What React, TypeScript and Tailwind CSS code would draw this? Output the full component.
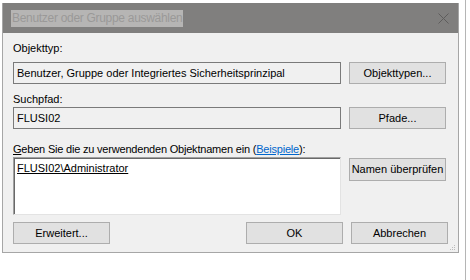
import React from "react";

const font = { fontFamily: '"Liberation Sans", Arial, sans-serif' };

function Btn({ children, className = "" }: { children: React.ReactNode; className?: string }) {
  return (
    <div
      className={`flex items-center justify-center border border-[#adadad] bg-[#e1e1e1] text-[11px] text-black ${className}`}
    >
      {children}
    </div>
  );
}

export default function App() {
  return (
    <div className="relative h-[280px] w-[470px] overflow-hidden bg-white" style={font}>
      <div className="flex h-full">
        <div className="ml-[2px] mt-[3px] flex h-[250px] w-[457px] flex-col border-x border-b border-[#a6a6a6] bg-[#f0f0f0]">
          {/* title bar */}
          <div className="flex h-[30px] shrink-0 items-center bg-[#807f7e] pl-[8px] pr-[9px]">
            <span className="bg-[#b6b5b4] px-[1px] text-[12px] leading-[17px] tracking-[-0.3px] text-[#9a9998]">
              Benutzer oder Gruppe auswählen
            </span>
            <div className="ml-auto flex items-center">
              <svg width="11" height="11" viewBox="0 0 11 11">
                <path d="M0.5 0.5 L10.5 10.5 M10.5 0.5 L0.5 10.5" stroke="#5e5d5c" strokeWidth="1" />
              </svg>
            </div>
          </div>
          {/* body */}
          <div className="relative flex flex-1 flex-col px-[10px] text-[11px] text-black">
            <div className="mt-[9px] h-[13px] leading-[13px]">Objekttyp:</div>
            <div className="mt-[7px] flex h-[22px] gap-[8px]">
              <div className="flex w-[328px] items-center border border-[#7a7a7a] bg-[#f0f0f0] pl-[3px]">
                Benutzer, Gruppe oder Integriertes Sicherheitsprinzipal
              </div>
              <Btn className="w-[97px]">Objekttypen...</Btn>
            </div>
            <div className="mt-[9px] h-[13px] leading-[13px]">Suchpfad:</div>
            <div className="mt-[1px] flex h-[22px] gap-[8px]">
              <div className="flex w-[328px] items-center border border-[#7a7a7a] bg-[#f0f0f0] pl-[3px]">
                FLUSI02
              </div>
              <Btn className="w-[97px]">Pfade...</Btn>
            </div>
            <div className="mt-[14px] h-[13px] leading-[13px] tracking-[-0.2px]">
              <span className="underline">G</span>eben Sie die zu verwendenden Objektnamen ein (
              <span className="text-[#0066cc] underline">Beispiele</span>):
            </div>
            <div className="mt-[1px] flex gap-[8px]">
              <div className="h-[58px] w-[328px] border border-t-[#a0a0a0] border-l-[#a0a0a0] border-r-[#e3e3e3] border-b-[#e3e3e3] bg-white">
                <div className="h-full border-l border-t border-l-[#696969] border-t-[#696969] pl-[2px] pt-[3px] leading-[13px]">
                  <span className="underline">FLUSI02\Administrator</span>
                </div>
              </div>
              <Btn className="mt-[1px] h-[23px] w-[97px]">Namen überprüfen</Btn>
            </div>
            <div className="mt-[7px] flex h-[22px]">
              <Btn className="w-[97px]">Erweitert...</Btn>
              <Btn className="ml-auto w-[97px]">OK</Btn>
              <Btn className="ml-[8px] w-[97px]">Abbrechen</Btn>
            </div>
            <div className="absolute bottom-[1px] right-[2px]">
              <svg width="7" height="7" viewBox="0 0 7 7">
                <rect x="5" y="1" width="1" height="1" fill="#bcbcbc" />
                <rect x="3" y="3" width="1" height="1" fill="#bcbcbc" />
                <rect x="5" y="3" width="1" height="1" fill="#bcbcbc" />
                <rect x="1" y="5" width="1" height="1" fill="#bcbcbc" />
                <rect x="3" y="5" width="1" height="1" fill="#bcbcbc" />
                <rect x="5" y="5" width="1" height="1" fill="#bcbcbc" />
              </svg>
            </div>
          </div>
        </div>
        <div className="ml-[6px] h-full w-px bg-[#b5b5b5]" />
      </div>
    </div>
  );
}
